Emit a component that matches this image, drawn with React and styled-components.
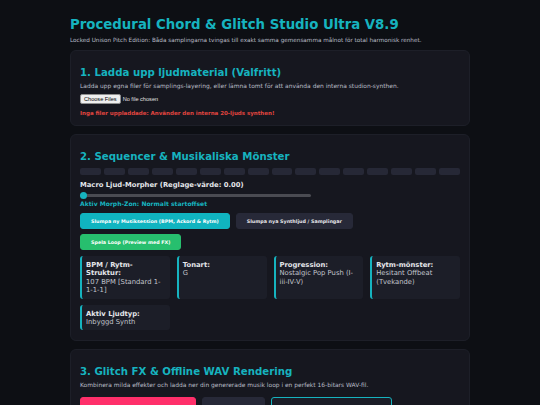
import React from 'react';
import styled, { createGlobalStyle } from 'styled-components';

const teal = '#16b3bf';

const steps = Array.from({ length: 16 });

const infoItems = [
  { label: 'BPM / Rytm-Struktur:', value: '107 BPM [Standard 1-1-1-1]' },
  { label: 'Tonart:', value: 'G' },
  { label: 'Progression:', value: 'Nostalgic Pop Push (I-iii-IV-V)' },
  { label: 'Rytm-mönster:', value: 'Hesitant Offbeat (Tvekande)' },
  { label: 'Aktiv Ljudtyp:', value: 'Inbyggd Synth' }
];

const App = () => (
  <Page>
    <GlobalStyle />
    <Header>
      <Title>Procedural Chord &amp; Glitch Studio Ultra V8.9</Title>
      <Subtitle>
        Locked Unison Pitch Edition: Båda samplingarna tvingas till exakt samma
        gemensamma målnot för total harmonisk renhet.
      </Subtitle>
    </Header>

    <Card>
      <SectionTitle>1. Ladda upp ljudmaterial (Valfritt)</SectionTitle>
      <Description>
        Ladda upp egna filer för samplings-layering, eller lämna tomt för att
        använda den interna studion-synthen.
      </Description>
      <FileInput type='file' multiple />
      <Warning>Inga filer uppladdade: Använder den interna 20-ljuds synthen!</Warning>
    </Card>

    <Card>
      <SectionTitle>2. Sequencer &amp; Musikaliska Mönster</SectionTitle>
      <StepRow>
        {steps.map((s, i) => (
          <Step key={i} />
        ))}
      </StepRow>
      <SliderLabel>Macro Ljud-Morpher (Reglage-värde: 0.00)</SliderLabel>
      <Track>
        <Thumb />
      </Track>
      <ZoneText>Aktiv Morph-Zon: Normalt startoffset</ZoneText>
      <ButtonRow>
        <Button $variant='teal'>Slumpa ny Musiksession (BPM, Ackord &amp; Rytm)</Button>
        <Button $variant='dark'>Slumpa nya Synthljud / Samplingar</Button>
      </ButtonRow>
      <ButtonRow>
        <Button $variant='green'>Spela Loop (Preview med FX)</Button>
      </ButtonRow>
      <InfoGrid>
        {infoItems.map(item => (
          <InfoCard key={item.label}>
            <InfoLabel>{item.label}</InfoLabel>
            <InfoValue>{item.value}</InfoValue>
          </InfoCard>
        ))}
      </InfoGrid>
    </Card>

    <Card>
      <SectionTitle>3. Glitch FX &amp; Offline WAV Rendering</SectionTitle>
      <Description>
        Kombinera milda effekter och ladda ner din genererade musik loop i en
        perfekt 16-bitars WAV-fil.
      </Description>
      <ButtonRow $top='8px'>
        <Button $variant='pink' $width='116px' $height='30px'>Aktivera Glitch FX</Button>
        <Button $variant='dark' $width='63px' $height='30px'>Stoppa</Button>
        <Button $variant='outline' $width='121px' $height='30px'>Ladda ner WAV</Button>
      </ButtonRow>
    </Card>
  </Page>
);

const GlobalStyle = createGlobalStyle`
  body {
    margin: 0;
    background: #0d0f14;
    font-family: 'DejaVu Sans', Verdana, sans-serif;
    color: #d6d8de;
  }
`;

const Page = styled.div`
  width: 400px;
  margin: 0 auto;
  padding: 16px 0 0;
`;

const Header = styled.header`
  margin-bottom: 6px;
`;

const Title = styled.h1`
  margin: 0 0 2px;
  color: ${teal};
  font-size: 13.3px;
  font-weight: 700;
  line-height: 18px;
`;

const Subtitle = styled.p`
  margin: 0;
  font-size: 5.7px;
  line-height: 8px;
  color: #b8bcc6;
  white-space: nowrap;
`;

const Card = styled.section`
  background: #16171f;
  border: 1px solid #1d1f28;
  border-radius: 6px;
  padding: 15px 9px 8px;
  margin-bottom: 8px;
`;

const SectionTitle = styled.h2`
  margin: 0 0 2px;
  color: ${teal};
  font-size: 10.2px;
  line-height: 14px;
  font-weight: 700;
`;

const Description = styled.p`
  margin: 0 0 4px;
  font-size: 5.95px;
  line-height: 8px;
  color: #b8bcc6;
  white-space: nowrap;
`;

const FileInput = styled.input`
  display: block;
  height: 12px;
  font-size: 5.6px;
  color: #e0e0e0;
  margin-bottom: 3px;

  &::file-selector-button {
    font-size: 5.6px;
    padding: 1px 3px;
    margin-right: 2px;
    background: #efefef;
    border: 1px solid #8f8f8f;
    border-radius: 2px;
    color: #000;
  }
`;

const Warning = styled.p`
  margin: 0;
  color: #e0453f;
  font-size: 5.5px;
  font-weight: 700;
  line-height: 8px;
`;

const StepRow = styled.div`
  display: grid;
  grid-template-columns: repeat(16, 1fr);
  gap: 3px;
  margin: 4px 0 6px;
`;

const Step = styled.div`
  height: 7px;
  border-radius: 2px;
  background: #262836;
`;

const SliderLabel = styled.div`
  font-size: 6.8px;
  font-weight: 700;
  color: #e4e6ea;
  line-height: 9px;
`;

const Track = styled.div`
  position: relative;
  width: 231px;
  height: 3px;
  margin: 4px 0 3px;
  border-radius: 2px;
  background: #4a4b52;
`;

const Thumb = styled.span`
  position: absolute;
  left: 0;
  top: -2px;
  width: 7px;
  height: 7px;
  border-radius: 50%;
  background: ${teal};
`;

const ZoneText = styled.div`
  font-size: 6.05px;
  font-weight: 700;
  color: ${teal};
  line-height: 8px;
`;

const variants = {
  teal: `background: #10b4c0; color: #fff; border: 1px solid #10b4c0;`,
  dark: `background: #272938; color: #e6e6ea; border: 1px solid #272938;`,
  green: `background: #27bf6e; color: #fff; border: 1px solid #27bf6e;`,
  pink: `background: #ff2f6a; color: #fff; border: 1px solid #ff2f6a;`,
  outline: `background: #1b1d27; color: ${teal}; border: 1px solid ${teal};`
};

const ButtonRow = styled.div`
  display: flex;
  gap: 6px;
  margin-top: ${({ $top }) => $top || '5px'};
`;

const Button = styled.button`
  ${({ $variant }) => variants[$variant]}
  ${({ $width }) => ($width ? `width: ${$width};` : '')}
  height: ${({ $height }) => $height || '16px'};
  padding: 0 10px;
  border-radius: 3px;
  font-family: 'DejaVu Sans', Verdana, sans-serif;
  font-size: 4.8px;
  font-weight: 700;
  white-space: nowrap;
`;

const InfoGrid = styled.div`
  display: grid;
  grid-template-columns: repeat(4, 1fr);
  gap: 6px 7px;
  margin: 6px 0 2px;
`;

const InfoCard = styled.div`
  background: #1c1e28;
  border-left: 2px solid ${teal};
  border-radius: 3px;
  padding: 5px 5px 4px 4px;
`;

const InfoLabel = styled.div`
  font-size: 6.8px;
  font-weight: 700;
  color: #e4e6ea;
  line-height: 8.4px;
`;

const InfoValue = styled.div`
  font-size: 6.8px;
  color: #c2c5cc;
  line-height: 8.4px;
`;

export default App;
